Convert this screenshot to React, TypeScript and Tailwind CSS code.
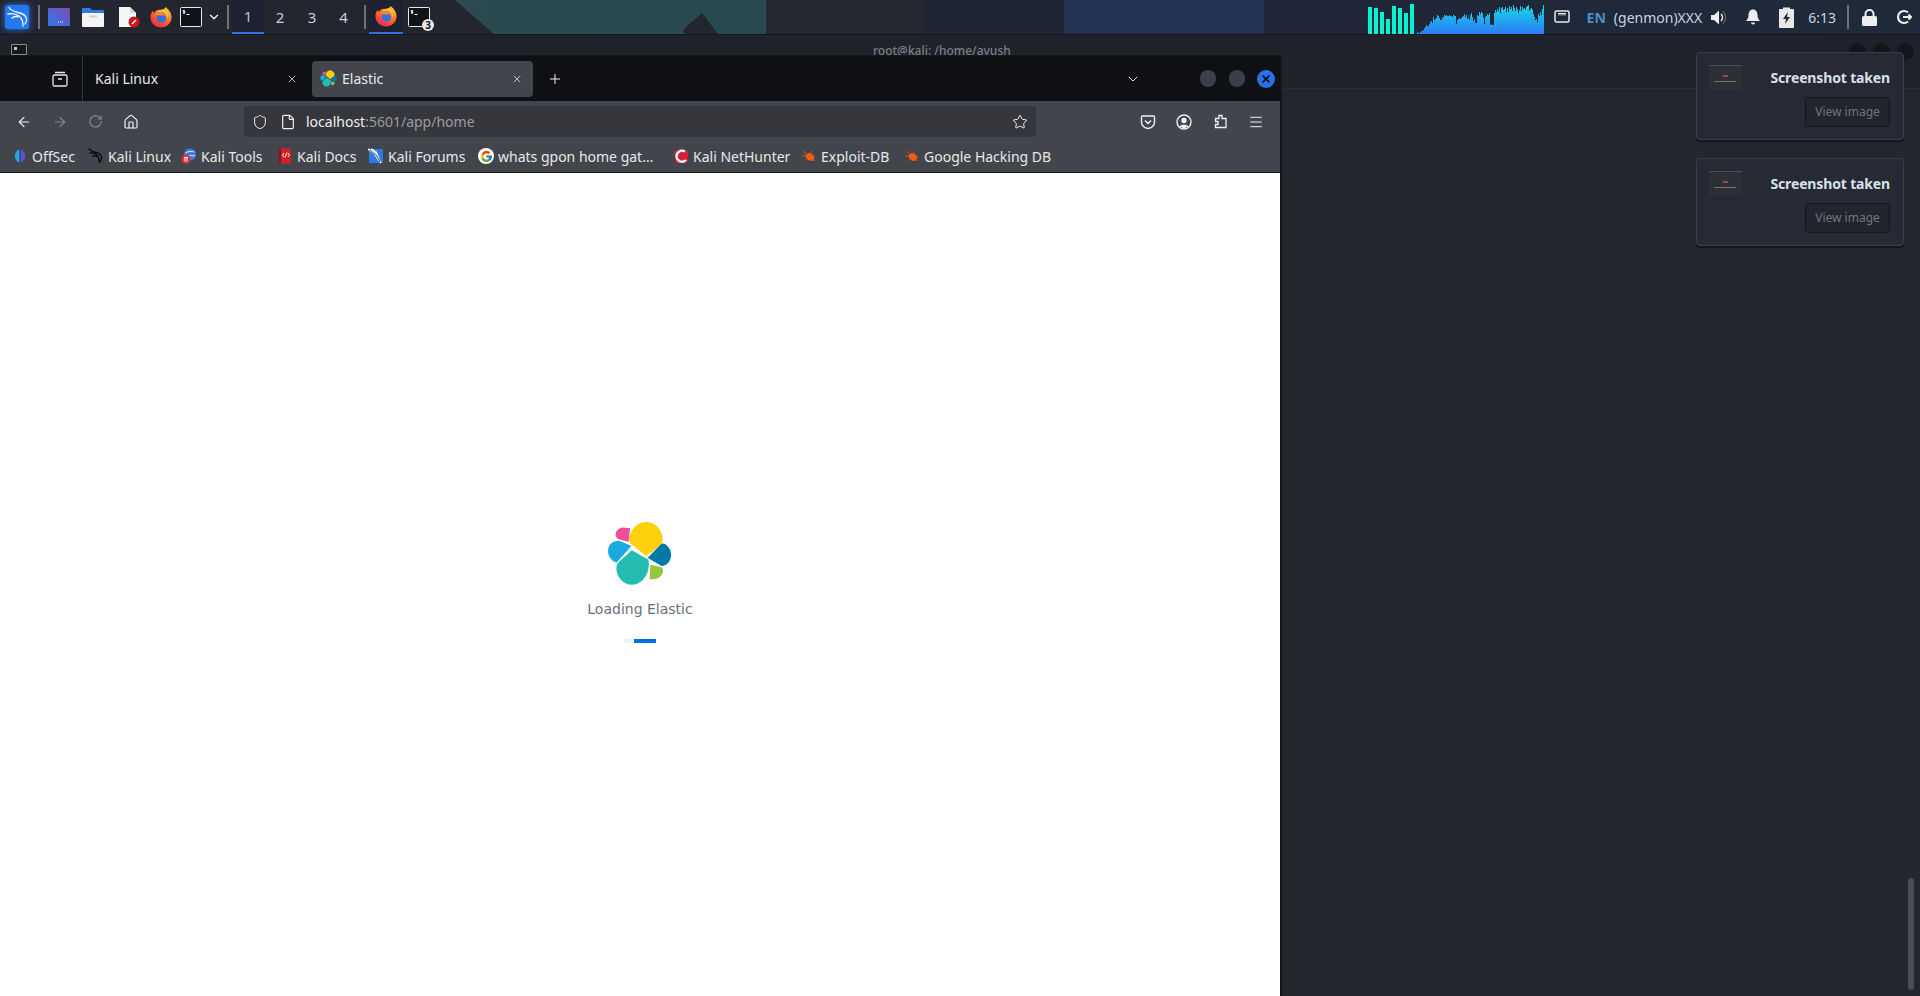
import * as React from 'react'
import { ArrowLeft, ArrowRight, ChevronDown, File, House, Menu, Plus, RotateCw, Shield, Star, X } from 'lucide-react'
import { FcGoogle } from 'react-icons/fc'

const Firefox = ({ className = "" }: any) => (
    <svg viewBox="0 0 24 24" className={className}>
        <defs>
            <linearGradient id="ffa" x1="0.8" y1="0" x2="0.2" y2="1">
                <stop offset="0" stopColor="#ffcb3d" />
                <stop offset="0.5" stopColor="#ff6a2b" />
                <stop offset="1" stopColor="#e0224e" />
            </linearGradient>
        </defs>
        <path d="M17 1c4 3 6.500 7 6.500 11 0 6.500-5 11.500-11.500 11.500S.5 18.500.5 12C.5 9.500 1.500 7 3 5.500c.5 1 1 1.500 1.500 2C6 5 9 3.500 12 4.500c2.500-.5 4.500-1.500 5-3.500z" fill="url(#ffa)" />
        <circle cx="12.500" cy="13" r="5" fill="#2f6fe8" />
        <path d="M6 10.500c2.500-1 4-.5 5.500 0 2-1 4-.5 5 1.500-.5-3-3-4.500-5.500-4.500-2 0-4 1-5 3z" fill="#ff8a24" />
        <path d="M8 7c3-1.500 6.500-1.500 8.500.5 2 2 2.500 4.500 2 7 2-3 1.500-8.500-1.500-10.500-3-1-6.500 0-9 3z" fill="#ffc02e" />
    </svg>
)

const TerminalIcon = ({ className = "" }: any) => (
    <svg viewBox="0 0 22 20" className={className}>
        <rect x="0.5" y="0.5" width="21" height="19" rx="1" fill="#111216" stroke="#e8e8e8" />
        <path d="M3 3.500h2M3 6h2M3 3.500v1.200h2v1.300H3M4 2.800v4" stroke="#fff" strokeWidth="0.7" fill="none" />
        <path d="M6.500 7.500h3" stroke="#fff" strokeWidth="1" />
    </svg>
)

const Sep = () => <div className="h-[24px] w-[2px] shrink-0 bg-[#6f7277]" />

// heights of the cpu graph, one per pixel
const graphHeights = [
    2, 1, 1, 2, 3, 3, 4, 6, 7, 9, 8, 8, 10, 12, 13, 11, 17, 14, 15, 16, 19, 18, 16, 14, 14, 16, 17, 19, 18, 19,
    18, 18, 19, 18, 18, 17, 19, 18, 18, 10, 14, 15, 16, 15, 16, 17, 18, 20, 17, 19, 15, 16, 14, 19, 21, 17, 13, 15, 11, 11,
    19, 18, 22, 20, 22, 21, 16, 10, 17, 18, 20, 19, 21, 9, 10, 9, 9, 21, 24, 22, 25, 23, 27, 21, 26, 27, 24, 25, 27, 22,
    26, 22, 28, 25, 27, 23, 29, 26, 23, 27, 25, 21, 24, 28, 23, 27, 25, 26, 24, 27, 28, 29, 23, 25, 26, 24, 20, 17, 14, 15,
    12, 20, 18, 22, 19, 25, 29,
]
const graphPath = "M0 30 " + graphHeights.map((h, i) => `L${i} ${30 - h} L${i + 1} ${30 - h}`).join(" ") + " L127 30 Z"

const Bars = () => (
    <div className="flex h-[30px] w-[46px] items-end justify-between">
        <div className="h-[27px] w-[4px] bg-[#07f2cf]" />
        <div className="h-[26px] w-[4px] bg-[#07f2cf]" />
        <div className="h-[22px] w-[4px] bg-[#07f2cf]" />
        <div className="h-[15px] w-[4px] bg-[#07f2cf]" />
        <div className="h-[28px] w-[4px] bg-[#07f2cf]" />
        <div className="h-[26px] w-[4px] bg-[#07f2cf]" />
        <div className="h-[21px] w-[4px] bg-[#07f2cf]" />
        <div className="h-[30px] w-[4px] bg-[#07f2cf]" />
    </div>
)

const Panel = () => (
    <header className="relative flex h-[35px] shrink-0 items-center border-b border-[#14161c] bg-[linear-gradient(90deg,#23262f_0,#23262f_455px,#2c4a50_455px,#264a50_766px,#262831_766px,#262831_922px,#1f2533_922px,#1f2533_1064px,#243353_1064px,#243353_1264px,#1f2637_1264px,#1f2b3a_100%)]">
        {/* the dark wedges of the wallpaper */}
        <svg className="absolute left-[455px] top-0 h-[34px] w-[285px]" viewBox="0 0 285 34">
            <path d="M0 0 L39 34 L0 34 Z M228 30 L247 13 L263 34 L230 34 Z" fill="#23262f" />
        </svg>
        <div className="relative flex h-full w-full items-center font-['Noto_Sans',sans-serif]">
            <div className="ml-[5px] flex h-[24px] w-[24px] items-center justify-center rounded-[3px] bg-[#2477f5] shadow-[0_0_6px_#2477f5]">
                <svg viewBox="0 0 24 24" className="h-[24px] w-[24px]" fill="none" stroke="#fff" strokeWidth="1.300" strokeLinecap="round">
                    <path d="M4 2.500c2 3 5 4 9 5 5 1 8 3 8.500 6.500M21.500 14c.5 2-.5 3.500-1.500 5M3 9c4-1 8 0 11 2 3 2 4 5 4 10M7 13c2-1.500 4-2 6-1" />
                </svg>
            </div>
            <div className="ml-[9px]"><Sep /></div>
            <svg viewBox="0 0 22 18" className="ml-[8px] h-[18px] w-[22px]">
                <defs>
                    <linearGradient id="dsk" x1="0" y1="1" x2="1" y2="0">
                        <stop offset="0" stopColor="#2f7ae8" />
                        <stop offset="1" stopColor="#7a4bb8" />
                    </linearGradient>
                </defs>
                <rect width="22" height="18" rx="1" fill="url(#dsk)" />
                <path d="M10 14h5" stroke="#fff" strokeWidth="1.200" strokeDasharray="1 1" />
            </svg>
            <svg viewBox="0 0 22 20" className="ml-[12px] h-[20px] w-[22px]">
                <path d="M0 2a1 1 0 0 1 1-1h7l2 2h11a1 1 0 0 1 1 1v3H0z" fill="#2c7be5" />
                <rect y="6" width="22" height="14" rx="1" fill="#f4f4f4" />
                <rect x="7" y="8.500" width="8" height="2" fill="#cfcfcf" />
            </svg>
            <svg viewBox="0 0 22 22" className="ml-[14px] h-[22px] w-[22px]">
                <path d="M1 1h11l6 6v14H1z" fill="#f5f5f5" />
                <path d="M12 1l6 6h-6z" fill="#d4d4d4" />
                <circle cx="16" cy="16" r="5.500" fill="#c9151e" />
                <path d="M14 18l4-4" stroke="#fff" strokeWidth="1.500" />
            </svg>
            <Firefox className="ml-[10px] h-[22px] w-[22px]" />
            <TerminalIcon className="ml-[8px] h-[20px] w-[22px]" />
            <ChevronDown className="ml-[5px] h-[14px] w-[14px] text-[#e8e8e8]" strokeWidth={2.500} />
            <div className="ml-[6px]"><Sep /></div>
            <div className="ml-[3px] flex h-full w-[32px] items-center justify-center border-b-2 border-[#2a72e0] bg-[#1e2230] text-[15px] text-[#a9c6e4]">1</div>
            <div className="flex h-full w-[32px] items-center justify-center text-[15px] text-[#c8d3e0]">2</div>
            <div className="flex h-full w-[32px] items-center justify-center text-[15px] text-[#c8d3e0]">3</div>
            <div className="flex h-full w-[31px] items-center justify-center text-[15px] text-[#c8d3e0]">4</div>
            <div className="ml-[5px]"><Sep /></div>
            <div className="ml-[3px] flex h-full w-[34px] items-center justify-center border-b-2 border-[#2a72e0] bg-[#1e2230]">
                <Firefox className="h-[22px] w-[22px]" />
            </div>
            <div className="relative ml-[5px]">
                <TerminalIcon className="h-[20px] w-[22px]" />
                <div className="absolute left-[14px] top-[12px] flex h-[12px] w-[12px] items-center justify-center rounded-full bg-[#e8e8e8] text-[10px] font-bold leading-none text-[#16181d]">3</div>
            </div>
            <div className="ml-auto flex h-full items-center">
                <div className="self-end"><Bars /></div>
                <svg viewBox="0 0 127 30" className="ml-[3px] h-[30px] w-[127px] self-end">
                    <defs>
                        <linearGradient id="grp" x1="0" y1="0" x2="0" y2="1">
                            <stop offset="0" stopColor="#16d8ea" />
                            <stop offset="1" stopColor="#2a7cf5" />
                        </linearGradient>
                    </defs>
                    <path d={graphPath} fill="url(#grp)" />
                </svg>
                <svg viewBox="0 0 16 14" className="ml-[10px] h-[14px] w-[16px]" fill="none">
                    <rect x="1" y="1" width="14" height="11" rx="1.500" stroke="#e8e8e8" strokeWidth="1.500" />
                    <path d="M4 3.500h8M5 3.500v2M7 3.500v2M9 3.500v2M11 3.500v2" stroke="#e8e8e8" />
                </svg>
                <span className="ml-[17px] text-[14px] font-bold text-[#4a90d0]">EN</span>
                <span className="ml-[8px] text-[14px] text-[#c8d3e0]">(genmon)XXX</span>
                <svg viewBox="0 0 17 17" className="ml-[8px] h-[17px] w-[17px]">
                    <path d="M1 6h3l5-4.500v14L4 11H1z" fill="#eee" />
                    <path d="M11 5a5 5 0 0 1 0 7" stroke="#eee" strokeWidth="1.500" fill="none" />
                    <path d="M13 2.500a8 8 0 0 1 0 12" stroke="#666" strokeWidth="1.200" fill="none" />
                </svg>
                <svg viewBox="0 0 14 16" className="ml-[19px] h-[16px] w-[14px]">
                    <path d="M7 0.500c3 0 4.500 2.500 4.500 5.500 0 3 1 4.500 2.500 6H0c1.500-1.500 2.500-3 2.500-6S4 .5 7 .5zM5 13.500h4a2 2 0 0 1-4 0z" fill="#eee" />
                </svg>
                <svg viewBox="0 0 15 21" className="ml-[19px] h-[21px] w-[15px]">
                    <path d="M4 2V0.500h7V2h3a1 1 0 0 1 1 1v17a1 1 0 0 1-1 1H1a1 1 0 0 1-1-1V3a1 1 0 0 1 1-1z" fill="#e8e8e8" />
                    <path d="M9 5L4 12h3l-1 5 5-7H8z" fill="#1f2a38" />
                </svg>
                <span className="ml-[14px] text-[14px] text-[#c8d3e0]">6:13</span>
                <div className="ml-[11px]"><Sep /></div>
                <svg viewBox="0 0 15 17" className="ml-[13px] h-[17px] w-[15px]">
                    <path d="M3.500 7V5a4 4 0 0 1 8 0v2" stroke="#eee" strokeWidth="2" fill="none" />
                    <rect y="7" width="15" height="10" rx="1.500" fill="#eee" />
                </svg>
                <svg viewBox="0 0 16 16" className="ml-[19px] mr-[8px] h-[16px] w-[16px]" fill="none" stroke="#eee" strokeWidth="2.200">
                    <path d="M12 3.500A6 6 0 1 0 12 12.500M7 8h8M12.500 5.500L15 8l-2.500 2.500" />
                </svg>
            </div>
        </div>
    </header>
)

const ElasticLogo = ({ className = "" }: any) => (
    <svg viewBox="140 65 195 195" className={className} strokeWidth="4" strokeLinejoin="round">
        <path d="M209 118C212 88 235 70 258 70C285 70 305 95 305 122C305 132 300 135 294 140L258 168L212 132C208 128 208 124 209 118Z" fill="#fed10a" stroke="#fed10a" />
        <path d="M168 103C170 92 182 85 195 87L207 88L203 125L176 118C170 115 167 110 168 103Z" fill="#f04e98" stroke="#f04e98" />
        <path d="M145 155C145 138 158 125 175 126L210 140L168 188C155 183 145 170 145 155Z" fill="#1ba9e0" stroke="#1ba9e0" />
        <path d="M170 205C170 198 172 193 178 188L215 155L262 182C266 200 262 215 255 228C245 245 230 254 215 254C190 254 170 232 170 205Z" fill="#24bbb1" stroke="#24bbb1" />
        <path d="M265 175L303 136C308 133 312 135 316 138C326 146 331 156 330 170C329 186 318 198 305 198Z" fill="#0179a6" stroke="#0179a6" />
        <path d="M272 198L300 205C306 207 307 212 306 218C303 230 290 238 270 238Z" fill="#93c83e" stroke="#93c83e" />
    </svg>
)

const Bookmark = ({ icon, label, className = "" }: any) => (
    <div className={"flex shrink-0 items-center " + className}>
        <div className="flex h-[16px] w-[16px] items-center justify-center">{icon}</div>
        <span className="ml-[4px] whitespace-nowrap">{label}</span>
    </div>
)

const Bug = () => (
    <svg viewBox="0 0 16 16" className="h-[16px] w-[16px]">
        <ellipse cx="9" cy="9" rx="4.500" ry="3.500" transform="rotate(30 9 9)" fill="#ee5d14" />
        <path d="M2 3l5 4M1 8h4M4 13l3-3M11 3L9 6M14 13l-3-2" stroke="#c9521b" strokeWidth="1" />
    </svg>
)

const Browser = () => (
    <section className="absolute left-0 top-[20px] flex h-[942px] w-[1282px] flex-col overflow-hidden rounded-tr-[5px] border-r-2 border-t border-[#14161c] font-['Noto_Sans',sans-serif]">
        <div className="flex h-[45px] shrink-0 items-center bg-[#0f1014]">
            <div className="flex h-full w-[83px] shrink-0 items-center justify-end border-r border-[#34363c] pr-[14px]">
                <svg viewBox="0 0 16 16" className="h-[16px] w-[16px]" fill="none" stroke="#e8e8e8" strokeWidth="1.300">
                    <path d="M3 1.500h10" />
                    <rect x="1" y="4" width="14" height="11" rx="1.500" />
                    <path d="M6 8h4" />
                </svg>
            </div>
            <div className="flex h-[36px] w-[229px] shrink-0 items-center pl-[12px] pr-[14px] text-[14px] text-[#e8e8ea]">
                <span>Kali Linux</span>
                <X className="ml-auto h-[12px] w-[12px]" strokeWidth={1.500} />
            </div>
            <div className="flex h-[36px] w-[221px] shrink-0 items-center rounded-[4px] bg-[#43454c] pl-[8px] pr-[10px] text-[14px] text-[#e8e8ea]">
                <ElasticLogo className="h-[17px] w-[17px]" />
                <span className="ml-[5px]">Elastic</span>
                <X className="ml-auto h-[12px] w-[12px]" strokeWidth={1.500} />
            </div>
            <Plus className="ml-[14px] h-[16px] w-[16px] text-[#f0f0f0]" strokeWidth={1.500} />
            <ChevronDown className="ml-[562px] h-[16px] w-[16px] text-[#e8e8ea]" strokeWidth={1.500} />
            <div className="ml-[59px] h-[17px] w-[16px] rounded-full bg-[#3a3f4b]" />
            <div className="ml-[13px] h-[17px] w-[16px] rounded-full bg-[#3a3f4b]" />
            <div className="ml-[12px] flex h-[18px] w-[18px] items-center justify-center rounded-full bg-[#2a6fe8]">
                <X className="h-[12px] w-[12px] text-[#0f1014]" strokeWidth={3.500} />
            </div>
        </div>
        <div className="flex h-[41px] shrink-0 items-center bg-[#43454c] text-[#f0f0f2]">
            <ArrowLeft className="ml-[16px] h-[16px] w-[16px]" strokeWidth={1.800} />
            <ArrowRight className="ml-[20px] h-[16px] w-[16px] text-[#85868b]" strokeWidth={1.800} />
            <RotateCw className="ml-[20px] h-[15px] w-[15px] text-[#85868b]" strokeWidth={1.800} />
            <House className="ml-[20px] h-[16px] w-[16px]" strokeWidth={1.800} />
            <div className="ml-[105px] flex h-[31px] w-[792px] items-center rounded-[4px] bg-[#36373c] pl-[8px] pr-[8px] text-[14px]">
                <Shield className="h-[16px] w-[16px]" strokeWidth={1.500} />
                <File className="ml-[12px] h-[16px] w-[16px]" strokeWidth={1.800} />
                <span className="ml-[10px]">localhost<span className="text-[#9a9ba0]">:5601/app/home</span></span>
                <Star className="ml-auto h-[16px] w-[16px]" strokeWidth={1.500} />
            </div>
            <svg viewBox="0 0 16 16" className="ml-[104px] h-[16px] w-[16px]" fill="none" stroke="#f0f0f2" strokeWidth="1.400">
                <path d="M2.500 2h11a1 1 0 0 1 1 1v5a6.500 6.500 0 0 1-13 0V3a1 1 0 0 1 1-1zM5 6.500l3 3 3-3" />
            </svg>
            <svg viewBox="0 0 16 16" className="ml-[20px] h-[16px] w-[16px]">
                <circle cx="8" cy="8" r="7" fill="none" stroke="#f0f0f2" strokeWidth="1.400" />
                <circle cx="8" cy="6.500" r="2.700" fill="#f0f0f2" />
                <path d="M3.500 12.500c1-2.500 8-2.500 9 0L8 14.500z" fill="#f0f0f2" />
            </svg>
            <svg viewBox="0 0 16 16" className="ml-[21px] h-[16px] w-[16px]" fill="none" stroke="#f0f0f2" strokeWidth="1.300">
                <path d="M6 1.500h3v3h4v9H2.500v-3H5v-3H2.500v-3H6z" />
            </svg>
            <Menu className="ml-[19px] h-[16px] w-[16px]" strokeWidth={1.500} />
        </div>
        <div className="flex h-[31px] shrink-0 items-center border-b border-[#14161c] bg-[#43454c] pb-[2px] text-[14px] text-[#e8e8ea]">
            <Bookmark className="ml-[12px] w-[76px]" label="OffSec" icon={
                <svg viewBox="0 0 16 16" className="h-[16px] w-[16px]">
                    <path d="M7.300 1.500A7 7 0 0 0 7.300 14.500z" fill="#27a5e0" />
                    <path d="M8.700 1.500A7 7 0 0 1 8.700 14.500z" fill="#5a4fd8" />
                </svg>
            } />
            <Bookmark className="w-[93px]" label="Kali Linux" icon={
                <svg viewBox="0 0 16 16" className="h-[16px] w-[16px]" fill="none" stroke="#0c0c0e" strokeWidth="1.400" strokeLinecap="round">
                    <path d="M1 1c2 2 4 3 7 3.500 3 .5 5 2 5.500 4.500M2 5c3-.5 5 .5 7 2 2 2 2.500 4 2.500 7.500M5 8c1.500-.5 2.500 0 3.500.5M13.500 9c.5 2 0 3-1 4" />
                </svg>
            } />
            <Bookmark className="w-[96px]" label="Kali Tools" icon={
                <svg viewBox="0 0 16 16" className="h-[16px] w-[16px]">
                    <circle cx="9" cy="6.500" r="6" fill="#3d7be0" />
                    <path d="M4.500 5c3-2 6-2 9-1M7 9c2-1.500 4-2 7-1" stroke="#dfe9f8" strokeWidth="1" fill="none" />
                    <circle cx="5" cy="11" r="4.500" fill="#d9333a" />
                    <path d="M3 9.500h4M4 9.500v4M6 9.500v4" stroke="#fff" strokeWidth="0.900" />
                </svg>
            } />
            <Bookmark className="w-[91px]" label="Kali Docs" icon={
                <svg viewBox="0 0 16 16" className="h-[16px] w-[16px]">
                    <rect x="2" y="0.500" width="12" height="15" rx="1" fill="#d21f27" />
                    <rect x="2" y="0.500" width="2" height="15" fill="#8a1218" />
                    <path d="M7 5L5.500 7 7 9M11 5l1.500 2L11 9M10 4.500L8 9.500" stroke="#fff" fill="none" strokeWidth="0.900" />
                </svg>
            } />
            <Bookmark className="w-[110px]" label="Kali Forums" icon={
                <svg viewBox="0 0 16 16" className="h-[16px] w-[16px]">
                    <rect x="1" y="1" width="14" height="14" rx="1" fill="#2a7be8" />
                    <path d="M0 1l6 4 7 10M3 1l5 3 3 7" stroke="#f4f4f4" strokeWidth="1.800" fill="none" />
                    <path d="M2 2l7 6 3 6" stroke="#1b1c20" strokeWidth="0.800" fill="none" />
                </svg>
            } />
            <Bookmark className="w-[195px]" label="whats gpon home gat…" icon={
                <div className="flex h-[16px] w-[16px] items-center justify-center rounded-full bg-white"><FcGoogle className="h-[13px] w-[13px]" /></div>
            } />
            <Bookmark className="w-[128px]" label="Kali NetHunter" icon={
                <svg viewBox="0 0 16 16" className="h-[16px] w-[16px]">
                    <path d="M1 3l12-1 2 2v9l-3 2H3z" fill="#d5203a" />
                    <path d="M12 3.500a5.500 5.500 0 1 0 1 8.500" stroke="#f4f4f4" strokeWidth="2.500" fill="none" />
                </svg>
            } />
            <Bookmark className="w-[103px]" label="Exploit-DB" icon={<Bug />} />
            <Bookmark label="Google Hacking DB" icon={<Bug />} />
        </div>
        <main className="flex flex-1 flex-col items-center bg-white pt-[348px] font-['DejaVu_Sans',sans-serif]">
            <ElasticLogo className="mr-[2px] h-[65px] w-[65px]" />
            <p className="mt-[13px] text-[14px] leading-[20px] text-[#69707d]">Loading Elastic</p>
            <div className="mt-[20px] flex h-[4px] w-[32px] justify-end bg-[#f0f3f6]">
                <div className="h-full w-[22px] bg-[#0071e0]" />
            </div>
        </main>
    </section>
)

const Notification = () => (
    <div className="flex h-[88px] w-[208px] flex-col rounded-[4px] border border-[#3a3d47] bg-[#272a34] pr-[13px] shadow-[0_2px_0_#14161c]">
        <div className="flex h-[44px] items-start">
            <div className="ml-[12px] mt-[12px] flex h-[25px] w-[48px] bg-[#292b34]">
                <div className="flex h-full w-[33px] flex-col items-start bg-[#2d2f37]">
                    <div className="h-[1px] w-full bg-[#4a4c52]" />
                    <div className="ml-[14px] mt-[9px] h-[2px] w-[5px] bg-[#9a4a4a]" />
                    <div className="ml-[5px] mt-[4px] h-[1px] w-[22px] bg-[#7a7268]" />
                </div>
            </div>
            <span className="ml-auto pt-[15px] font-['Noto_Sans',sans-serif] text-[14px] font-bold leading-[20px] tracking-[-0.15px] text-[#d8e0e8]">Screenshot taken</span>
        </div>
        <div className="ml-auto flex h-[30px] w-[85px] items-center justify-center rounded-[4px] border border-[#15171c] bg-[#23252e] font-['Noto_Sans',sans-serif] text-[12px] text-[#6f747c]">View image</div>
    </div>
)

const App = () => {
    return (
        <div className="flex h-[996px] w-[1920px] flex-col overflow-hidden bg-[#23262f]">
            <Panel />
            <div className="relative flex-1">
                {/* terminal window sitting behind the browser */}
                <div className="flex h-[54px] items-start border-b border-[#2b2e36] bg-[#1f222b] pt-[8px] font-['Noto_Sans',sans-serif] text-[12px] font-medium leading-[16px] text-[#7b7e85]">
                    <span className="ml-[873px]">root@kali: /home/avush</span>
                    <div className="ml-auto mr-[6px] flex gap-[7px]">
                        <div className="h-[17px] w-[17px] rounded-full bg-[#14161b]" />
                        <div className="h-[17px] w-[17px] rounded-full bg-[#14161b]" />
                        <div className="h-[17px] w-[17px] rounded-full bg-[#14161b]" />
                    </div>
                </div>
                <div className="absolute left-[11px] top-[9px] flex h-[11px] w-[16px] items-start rounded-t-[1px] border border-[#8a8c90] bg-[#16181d] pl-[2px] pt-[2px]">
                    <div className="h-[3px] w-[3px] bg-[#c8c8c8]" />
                </div>
                <Browser />
                <div className="absolute left-[1696px] top-[17px] flex flex-col gap-[18px]">
                    <Notification />
                    <Notification />
                </div>
                <div className="absolute left-[1908px] top-[843px] h-[112px] w-[6px] rounded-full bg-[#4b4d52]" />
            </div>
        </div>
    )
}

export default App
